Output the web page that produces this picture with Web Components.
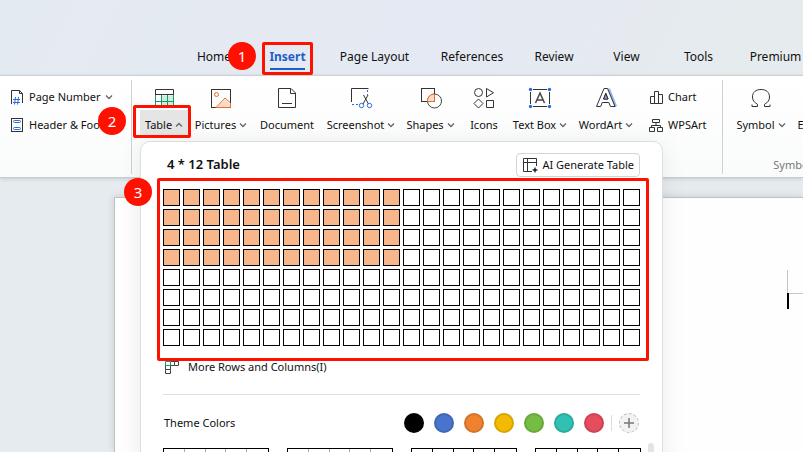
<!DOCTYPE html>
<html lang="en">
<head>
<meta charset="utf-8">
<title>Insert Table</title>
<style>
html,body{margin:0;height:100%;overflow:hidden}
body{font-family:"Noto Sans","Open Sans",sans-serif;font-size:11px;line-height:16px;color:#111}
</style>
</head>
<body>
<writer-app></writer-app>
<script>
const ICONS = {
  pagenum: [16,16,'<path d="M2.500 15V1.500h8l3 3V14M10.500 1.500v3h3" stroke="#333"/><path d="M6.500 8l-1 7.500M9.500 8l-1 7.500M4 10.500h7M4 13.500h7" stroke="#2e6be0"/>'],
  header: [16,16,'<rect x="2.500" y="1.500" width="11" height="13" stroke="#333"/><rect x="4.500" y="3.500" width="7" height="2" rx="1" stroke="#2e6be0"/><rect x="4.500" y="10.500" width="7" height="2" rx="1" stroke="#2e6be0"/>'],
  table: [24,24,'<path d="M9 9.500h12v12H9z" fill="#c9eee0"/><path d="M3.500 9V3.500h18V9" stroke="#333"/><path d="M3.500 8.500h18" stroke="#333"/><path d="M3.500 9v12M21.500 9v12M9.500 9v12M15.500 9v12M3 15.500h19" stroke="#159a68"/>'],
  picture: [24,24,'<path d="M7 21.500l9-8.500 5 5v3.500z" fill="#fbdccb"/><rect x="2.500" y="3.500" width="19" height="18" stroke="#333"/><circle cx="7.500" cy="8.500" r="2" stroke="#e5702a"/><path d="M7 21.500l9-9.500 5.500 5v4.500z" stroke="#e5702a"/>'],
  doc: [24,24,'<path d="M3.500 2.500H16l4.500 4.500v14.500h-17zM15.500 2.500v5h5" stroke="#333"/><path d="M7 17.500h10" stroke="#333"/>'],
  shot: [24,24,'<path d="M2.500 16V2.500h17" stroke="#333"/><path d="M18.500 4v5" stroke="#2e6be0" stroke-dasharray="2 2"/><path d="M3 18.500h6" stroke="#2e6be0" stroke-dasharray="2 2"/><path d="M14.500 9l5 9M19 9l-5 9" stroke="#333"/><circle cx="12.500" cy="19.500" r="2.200" stroke="#2e6be0"/><circle cx="20.500" cy="19.500" r="2.200" stroke="#2e6be0"/>'],
  shapes: [24,24,'<rect x="2.500" y="2.500" width="13" height="13" stroke="#333"/><circle cx="15.500" cy="15" r="7" stroke="#444"/><path d="M8.500 15.500a7 7 0 0 1 7-7.500v7.500z" stroke="#e5702a" fill="#fbdccb"/>'],
  icons: [24,24,'<circle cx="6.500" cy="6.500" r="4" stroke="#333"/><path d="M14.500 2.500v8.500l7-4.250zM6.500 13l4.500 4.500-4.500 4.500L2 17.500zM14.500 14.500h7v7h-7z" stroke="#333"/>'],
  textbox: [24,24,'<path d="M5 3.500h14M5 20.500h14M2.500 6v12M21.500 6v12" stroke="#333"/><path d="M7.500 17L12 7l4.500 10M9 14h6" stroke="#444" stroke-width="1.500"/><g fill="#2e6be0" stroke="none"><circle cx="2.500" cy="3.500" r="1.700"/><circle cx="21.500" cy="3.500" r="1.700"/><circle cx="2.500" cy="20.500" r="1.700"/><circle cx="21.500" cy="20.500" r="1.700"/></g>'],
  wordart: [24,24,'<path d="M14 2.500l2 0 7 17.500-2.500 1.500z" fill="#8fb2ee"/><path d="M2.500 20.500L10 2.500h3.500l7.500 18h-4.500l-1.700-4H8.200l-1.500 4zM9.500 13h4.600l-2.300-6z" fill="#fff" fill-rule="evenodd" stroke="#333"/><path d="M9.700 13h4.200l-2.100-5z" fill="#8fb2ee" stroke="#333"/>'],
  chart: [16,16,'<path d="M2.500 7.500h4v7h-4zM6.500 2.500h4v12h-4zM10.500 5.500h4v9h-4z" stroke="#333"/>'],
  org: [16,16,'<path d="M4.500 2.500h7v3h-7zM1.500 10.500h5v4h-5zM9.500 10.500h5v4h-5zM8 6v2.500M3.500 10.500v-2h9v2" stroke="#333"/>'],
  omega: [24,24,'<path d="M3 20.500h5.500v-2.200C5 16.500 3.500 14 3.500 11 3.500 6 7 3.500 12 3.500S20.500 6 20.500 11c0 3-1.500 5.500-5 7.300v2.200H21" stroke="#333"/><path d="M3 20.500v-2M21 20.500v-2" stroke="#333"/>'],
  eq: [24,24,'<path d="M11 12l3 7 4-15h11" stroke="#333"/>'],
  ai: [16,16,'<path d="M10 14.500H1.500v-13h13V9M1.500 5.500h13M5.500 1.500v13" stroke="#333"/><path d="M13 9.800l.9 2.300 2.300.9-2.300.9-.9 2.300-.9-2.300-2.300-.9 2.300-.9z" fill="#222"/>'],
  more: [16,16,'<path d="M5.500 2.500h4v4h-4zM9.500 2.500h4v4h-4zM.5 6.500h5v4h-5zM.5 10.500h5v4h-5z" stroke="#444"/><path d="M.5 2.500h5v4h-5z" stroke="#159a68"/>'],
  down: [8,8,'<path d="M1 2.500l3 3 3-3" stroke="#666" stroke-width="1.300"/>'],
  up: [8,8,'<path d="M1 5.500l3-3 3 3" stroke="#666" stroke-width="1.300"/>']
};

function component(name, css, html) {
  customElements.define(name, class extends HTMLElement {
    constructor() {
      super();
      this.attachShadow({mode: 'open'});
    }
    connectedCallback() {
      const body = typeof html === 'function' ? html(this) : html;
      this.shadowRoot.innerHTML = `<style>*{box-sizing:border-box}button{font:inherit;color:inherit;background:none;border:0;padding:0;margin:0}${css}</style>${body}`;
    }
  });
}

component('app-icon', ':host{display:block;flex:none}svg{display:block;fill:none;overflow:visible}', el => {
  const [w, h, d] = ICONS[el.getAttribute('name')];
  return `<svg width="${w}" height="${h}" viewBox="0 0 ${w} ${h}" aria-hidden="true">${d}</svg>`;
});

component('app-tab', `
:host{display:grid;justify-items:center;font-size:12px}
button{position:relative;height:28px;white-space:nowrap}
:host([active]) button{color:#1f5dc8;font-weight:700}
:host([active]) button::after{content:"";position:absolute;left:1px;right:1px;bottom:1px;height:2px;background:#1f5dc8}
`, '<button role="tab"><slot></slot></button>');

component('tab-bar', `
:host{display:grid;grid-template-columns:72px 75px 99px 96px 68px 77px 67px 87px;padding:43px 0 4px 178px;height:75px;overflow:hidden;box-sizing:border-box}
`, '<slot></slot>');

component('tool-button', `
:host{display:block;flex:none;width:var(--w)}
button{width:100%;display:grid;justify-items:center;grid-template-rows:24px 25px}
.label{display:flex;align-items:center;justify-content:center;gap:3px;white-space:nowrap;width:100%;height:25px;padding-top:5px}
:host([open]) .label{background:#e5e5e5}
`, el => `<button><app-icon name="${el.getAttribute('icon')}"></app-icon><span class="label"><slot></slot>${el.hasAttribute('menu') ? `<app-icon name="${el.hasAttribute('open') ? 'up' : 'down'}"></app-icon>` : ''}</span></button>`);

component('mini-tool', `
:host{display:block}
button{display:flex;align-items:center;gap:4px;height:20px;white-space:nowrap}
`, el => `<button><app-icon name="${el.getAttribute('icon')}"></app-icon><slot></slot>${el.hasAttribute('menu') ? '<app-icon name="down"></app-icon>' : ''}</button>`);

component('app-ribbon', `
:host{display:flex;height:103px;background:linear-gradient(#fff,#fafbfb);border-top:1px solid #ccd1d5;border-bottom:1px solid #c6cbcf;box-shadow:0 1px 4px #0002;box-sizing:border-box;overflow:hidden;position:relative}
.stack{display:grid;grid-template-rows:20px 20px;gap:8px;align-content:start;padding-top:11px;flex:none}
.first{width:131px;padding-left:9px}
.second{width:81px;padding-left:7px}
.sep{flex:none;width:1px;height:94px;margin-top:4px;background:#cfd1d3}
.tools{display:flex;padding:10px 0 0 8px;flex:none}
.symbols{display:grid;align-content:space-between;flex:none;padding:10px 0 4px 7px}
.row{display:flex}
.group{color:#777;justify-self:center}
`, `
<div class="stack first"><mini-tool icon="pagenum" menu>Page Number</mini-tool><mini-tool icon="header">Header &amp; Footer</mini-tool></div>
<div class="sep"></div>
<div class="tools">
<tool-button icon="table" menu open style="--w:48px">Table</tool-button>
<tool-button icon="picture" menu style="--w:66px">Pictures</tool-button>
<tool-button icon="doc" style="--w:66px">Document</tool-button>
<tool-button icon="shot" menu style="--w:82px">Screenshot</tool-button>
<tool-button icon="shapes" menu style="--w:57px">Shapes</tool-button>
<tool-button icon="icons" style="--w:50px">Icons</tool-button>
<tool-button icon="textbox" menu style="--w:62px">Text Box</tool-button>
<tool-button icon="wordart" menu style="--w:70px">WordArt</tool-button>
</div>
<div class="stack second"><mini-tool icon="chart">Chart</mini-tool><mini-tool icon="org">WPSArt</mini-tool></div>
<div class="sep"></div>
<div class="symbols"><div class="row"><tool-button icon="omega" menu style="--w:62px">Symbol</tool-button><tool-button icon="eq" menu style="--w:68px">Equation</tool-button></div><span class="group">Symbols</span></div>
`);

component('doc-workspace', `
:host{display:block;padding:19px 0 0 114px;flex:1;min-height:0}
.paper{height:100%;background:#fefefe;border:1px solid #bfc2c5;border-right:0;border-bottom:0;box-shadow:0 0 8px #0002;display:flex;justify-content:flex-end}
.corner{width:16px;height:24px;margin-top:72px;border-left:1px solid #c6c6c6;border-bottom:1px solid #c6c6c6}
.text{width:16px}
.caret{width:2px;height:16px;margin-top:-1px;background:#000}
`, '<div class="paper"><div class="text"><div class="corner"></div><div class="caret"></div></div></div>');

component('cell-grid', `
:host{display:grid;grid-template-columns:repeat(24,17px);gap:3px}
button{height:17px;border:1px solid #000;background:#fff}
button.on{background:#f8b78b}
`, el => {
  let s = '';
  for (let r = 1; r <= 8; r++) for (let c = 1; c <= 24; c++)
    s += `<button aria-label="${r} by ${c}"${r <= el.getAttribute('rows') && c <= el.getAttribute('cols') ? ' class="on"' : ''}></button>`;
  return s;
});

component('color-swatch', `
:host{display:block;width:20px;height:20px}
input{appearance:none;display:block;margin:0;width:20px;height:20px;border-radius:50%;background:var(--c);border:2px solid #0000001c}
`, el => `<input type="radio" name="theme" aria-label="${el.getAttribute('name')}">`);

component('style-preview', `
:host{display:block}
button{width:106px;height:60px;display:grid;grid-template-columns:repeat(5,1fr);border:1px solid #000;background:#fff}
i{height:100%;border-right:1px solid var(--line,#000)}
i:last-child{border:0}
`, '<button aria-label="Table style"><i></i><i></i><i></i><i></i><i></i></button>');

component('table-panel', `
:host{display:block;position:absolute;left:140px;top:141px;width:523px;height:400px;background:#fff;border:1px solid #dcdfe1;border-radius:10px;box-shadow:0 2px 24px #00000014;padding:11px 22px 0;box-sizing:border-box}
header{display:flex;justify-content:space-between;align-items:center;height:24px;padding-left:4px}
h2{margin:0;font-size:13px;line-height:20px;height:22px;font-weight:600}
.ai{display:flex;align-items:center;gap:4px;height:24px;padding:0 5px 0 5px;border:1px solid #d2d4d6;border-radius:4px;white-space:nowrap}
cell-grid{margin-top:12px}
.more{display:flex;align-items:center;gap:8px;height:24px;margin-top:9px;padding-left:2px;font-size:12px}
.more app-icon{width:15px}
hr{border:0;height:1px;background:#dfdfdf;margin:15px 0 18px}
.theme{display:flex;align-items:center;justify-content:space-between;height:20px;padding:0 1px}
.colors{display:flex;gap:10px;align-items:center}
.bar{width:1px;height:16px;background:#ddd;margin:0 -3px}
.plus{width:20px;height:20px;border-radius:50%;border:1px dashed #bbb;background:#f2f2f2;display:grid;place-items:center}
.styles{display:flex;gap:18px;margin-top:15px}
.thumb{position:absolute;right:8px;top:301px;width:6px;height:60px;border-radius:3px;background:#e4e4e4}
`, `
<header><h2>4 * 12 Table</h2><button class="ai"><app-icon name="ai"></app-icon>AI Generate Table</button></header>
<cell-grid rows="4" cols="12"></cell-grid>
<button class="more" style="font-size:11px"><app-icon name="more"></app-icon>More Rows and Columns(I)</button>
<hr>
<div class="theme"><span>Theme Colors</span><div class="colors">
<color-swatch name="Black" style="--c:#000"></color-swatch><color-swatch name="Blue" style="--c:#4874cb"></color-swatch><color-swatch name="Orange" style="--c:#ee822f"></color-swatch><color-swatch name="Yellow" style="--c:#f2ba02"></color-swatch><color-swatch name="Green" style="--c:#75bd42"></color-swatch><color-swatch name="Teal" style="--c:#30c0b4"></color-swatch><color-swatch name="Red" style="--c:#e54c5e"></color-swatch>
<span class="bar"></span><button class="plus" aria-label="Add color"><svg width="12" height="12" viewBox="0 0 12 12"><path d="M1 6h10M6 1v10" stroke="#777" stroke-width="1.500"/></svg></button></div></div>
<div class="styles"><style-preview style="--line:#aaa"></style-preview><style-preview style="--line:#aaa"></style-preview><style-preview></style-preview><style-preview></style-preview></div>
<div class="thumb"></div>
`);

component('step-badge', `
:host{position:absolute;left:var(--x);top:var(--y);width:28px;height:28px;border-radius:50%;background:#fe1100;color:#fff;display:grid;place-items:center;font-size:15px;line-height:20px}
`, '<slot></slot>');

component('step-frame', `
:host{position:absolute;left:var(--x);top:var(--y);width:var(--w);height:var(--h);border:3px solid #fe1100;border-radius:2px;box-sizing:border-box;pointer-events:none}
`, '');

component('writer-app', `
:host{display:flex;flex-direction:column;position:relative;height:100vh;overflow:hidden;background:linear-gradient(115deg,#e4ebf0,#e5e9f3 45%,#e6ebee 75%,#e4eaee)}
doc-workspace{background:#e6ebef}
`, `
<tab-bar role="tablist"><app-tab>Home</app-tab><app-tab active>Insert</app-tab><app-tab>Page Layout</app-tab><app-tab>References</app-tab><app-tab>Review</app-tab><app-tab>View</app-tab><app-tab>Tools</app-tab><app-tab>Premium</app-tab></tab-bar>
<app-ribbon></app-ribbon>
<doc-workspace></doc-workspace>
<table-panel></table-panel>
<step-frame style="--x:262px;--y:42px;--w:51px;--h:33px"></step-frame>
<step-frame style="--x:133px;--y:105px;--w:58px;--h:33px"></step-frame>
<step-frame style="--x:157px;--y:178px;--w:492px;--h:183px"></step-frame>
<step-badge style="--x:228px;--y:42px">1</step-badge>
<step-badge style="--x:98px;--y:107px">2</step-badge>
<step-badge style="--x:124px;--y:178px">3</step-badge>
`);
</script>
</body>
</html>
